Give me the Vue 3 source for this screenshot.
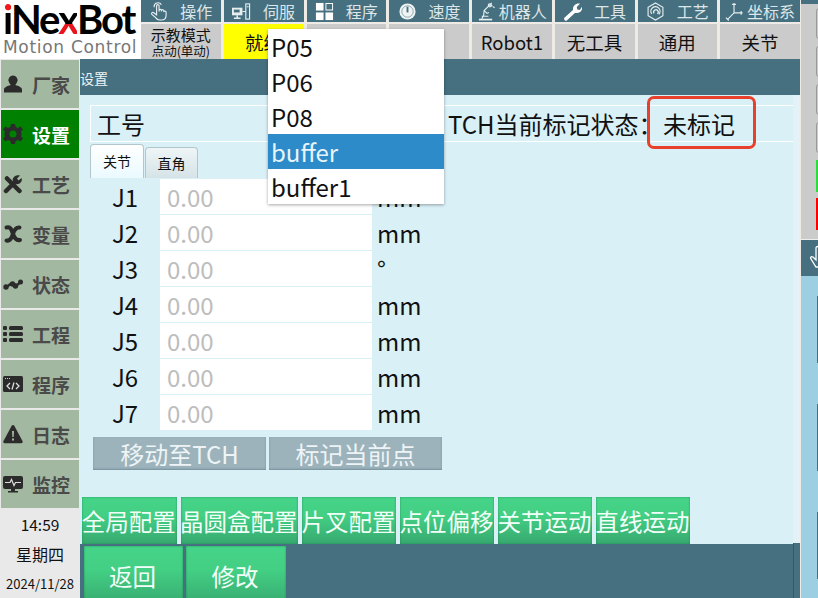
<script setup>
const nav = [
  { t: '操作', i: 'hand' }, { t: '伺服', i: 'servo' }, { t: '程序', i: 'grid' }, { t: '速度', i: 'gauge' },
  { t: '机器人', i: 'robot' }, { t: '工具', i: 'wrench' }, { t: '工艺', i: 'hex' }, { t: '坐标系', i: 'axes' }
]
const side = [
  { t: '厂家', i: 'user' }, { t: '设置', i: 'gear', on: true }, { t: '工艺', i: 'tools' }, { t: '变量', i: 'var' },
  { t: '状态', i: 'wave' }, { t: '工程', i: 'list' }, { t: '程序', i: 'code' }, { t: '日志', i: 'warn' }, { t: '监控', i: 'monitor' }
]
const joints = [
  ['J1', 'mm'], ['J2', 'mm'], ['J3', '°'], ['J4', 'mm'], ['J5', 'mm'], ['J6', 'mm'], ['J7', 'mm']
]
const greens = [
  ['全局配置', 94.5], ['晶圆盒配置', 117.5], ['片叉配置', 94], ['点位偏移', 94], ['关节运动', 94], ['直线运动', 94]
]
const options = ['P05', 'P06', 'P08', 'buffer', 'buffer1']
</script>

<template>
  <div class="screen">
    <div class="left">
      <header class="top">
        <div class="logo">
          <div class="brand"><span class="i">i</span>Ne<span class="x">x</span>Bot</div>
          <div class="motto">Motion Control</div>
        </div>
        <div class="topgrid">
          <div v-for="n in nav" :key="n.t" class="navitem" :class="{ wide: n.t.length > 2 }">
            <svg class="navicon" viewBox="0 0 20 20" fill="none" stroke="#e6eef0" stroke-width="1.2">
              <g v-if="n.i === 'hand'">
                <path d="M8 6.500V4a1.300 1.300 0 0 1 2.600 0v6l.1-1.200a1.200 1.200 0 0 1 2.400 .2V10l.1-.8a1.200 1.200 0 0 1 2.400 .2v1l.1-.2a1.200 1.200 0 0 1 2.300 .3V14c0 3-2 5-5 5h-2c-2 0-3-1-4-2.500L3 13c-1-1.500.8-2.800 2-1.700L8 13.500z" />
                <path d="M5.500 5.500a4 4 0 0 1 7.500-2.500" />
              </g>
              <g v-else-if="n.i === 'servo'">
                <rect x="0" y="6" width="11" height="8" fill="#e6eef0" stroke="none" />
                <rect x="2" y="8" width="6" height="3" fill="#46707f" stroke="none" />
                <path d="M2 17h7M5.500 14v3" stroke-width="1.600" />
                <rect x="14.500" y="2" width="4" height="16" />
                <path d="M11 10h3.500M15.500 5h2" />
              </g>
              <g v-else-if="n.i === 'grid'" stroke="none" fill="#fff">
                <rect x="1" y="1" width="8" height="8" />
                <path d="M11 1h8v8h-8zM12 2v6h6V2z" fill-rule="evenodd" />
                <rect x="1" y="11" width="8" height="8" />
                <rect x="11" y="11" width="8" height="8" />
              </g>
              <g v-else-if="n.i === 'gauge'">
                <circle cx="10" cy="10" r="8.500" fill="#eef3f4" stroke="none" />
                <circle cx="10" cy="10" r="6" stroke="#8aa4ae" stroke-width="1" />
                <path d="M10 11V5" stroke="#46707f" stroke-width="2" />
              </g>
              <g v-else-if="n.i === 'robot'">
                <path d="M2 18.500h14" stroke-width="1.800" />
                <path d="M5 18l2-4 .5-5 6-6 3 1.500M5 15h7M7.500 9l3 3 2-1M13.500 3l2-2M17 5l1.500 1" />
                <circle cx="13.500" cy="3.500" r="1.600" />
              </g>
              <path v-else-if="n.i === 'wrench'" d="M1.500 16.500L10.500 8.500C10 4 13.500 .8 18 1.700L14.500 5.300l.6 2.500 2.600.5L20 5c.8 4-2.500 7.500-7.500 6.500L4 19.500c-1.300 1-3.800-1.200-2.500-3z" fill="#fff" stroke="none" />
              <g v-else-if="n.i === 'hex'">
                <path d="M10 1l7.800 4.500v9L10 19l-7.800-4.500v-9z" />
                <path d="M6 12.500a4.800 4.800 0 1 1 7.500 .5M8.500 12a2.400 2.400 0 1 1 3.500 .5" stroke-width="1.300" />
              </g>
              <g v-else>
                <path d="M9.500 1v10.500M9.500 11.500h9M9.500 11.500l-7 7" />
                <path d="M7.500 2.500h4M17 9.500v4M1 16.500l3 3" />
              </g>
            </svg>
            <span>{{ n.t }}</span>
          </div>
          <div class="state mode"><span>示教模式</span><small>点动(单动)</small></div>
          <div class="state ready">就绪</div>
          <div class="state"></div>
          <div class="state"></div>
          <div class="state">Robot1</div>
          <div class="state">无工具</div>
          <div class="state">通用</div>
          <div class="state">关节</div>
        </div>
      </header>

      <div class="body">
        <aside class="side">
          <div v-for="s in side" :key="s.t" class="sideitem" :class="{ on: s.on }">
            <svg class="sideicon" viewBox="0 0 20 20" fill="#2b2b2b">
              <path v-if="s.i === 'user'" d="M10 1.500a4.500 4.500 0 0 1 4.200 6.200c-.5 1.500-1.500 2.800-2 3.300 3.800 1 6.800 2.500 6.800 4.500V18.500H1v-3c0-2 3-3.500 6.800-4.500-.5-.5-1.500-1.800-2-3.300A4.500 4.500 0 0 1 10 1.500z" />
              <path v-else-if="s.i === 'gear'" fill-rule="evenodd" d="M8 0h4l.6 3 2.400 1 2.600-1.600 2.400 3-2 2.200.6 2.400-.6 2.400 2 2.200-2.400 3L15 16l-2.400 1L12 20H8l-.6-3L5 16l-2.600 1.600-2.400-3 2-2.200L1.400 10 2 7.600 0 5.400l2.400-3L5 4l2.400-1zM10 6.500a3.500 3.500 0 1 0 0 7 3.500 3.500 0 0 0 0-7z" />
              <g v-else-if="s.i === 'tools'">
                <path d="M4 4.500L16.500 17" stroke="#2b2b2b" stroke-width="4.500" stroke-linecap="round" />
                <path d="M2.500 2.500L6 3.500 4 6z" />
                <path d="M3 17L11.500 8.500" stroke="#2b2b2b" stroke-width="4.500" stroke-linecap="round" />
                <path d="M9.500 6C10 2.500 13.500 .5 17 1.500L14 4.500l1.500 2 3-2.500C20 7.500 16.500 11 12.500 10z" />
              </g>
              <g v-else-if="s.i === 'var'" fill="none" stroke="#2b2b2b" stroke-width="4" stroke-linecap="round">
                <path d="M3.500 3.500C8 2 9 7 10 10s2.500 7 7 6" />
                <path d="M16.500 3.500C12 3 11 7 10 10S7.500 17.500 3.500 16.500" />
              </g>
              <g v-else-if="s.i === 'wave'">
                <path d="M3 13c2 0 3.500-3.500 6-3.500S12 12 14 11s2-2 3.500-3" fill="none" stroke="#2b2b2b" stroke-width="2.500" />
                <circle cx="3" cy="13" r="2.700" /><circle cx="9.500" cy="10" r="2.700" /><circle cx="12.500" cy="12" r="2.700" /><circle cx="17.500" cy="8" r="2.500" />
              </g>
              <g v-else-if="s.i === 'list'">
                <rect x="0" y="2" width="4" height="4" rx="1" /><rect x="6" y="2" width="14" height="4" rx="1.500" />
                <rect x="0" y="8" width="4" height="4" rx="1" /><rect x="6" y="8" width="14" height="4" rx="1.500" />
                <rect x="0" y="14" width="4" height="4" rx="1" /><rect x="6" y="14" width="14" height="4" rx="1.500" />
              </g>
              <g v-else-if="s.i === 'code'">
                <rect x="0" y="2" width="20" height="16" rx="1.500" />
                <path d="M7 9l-3 3 3 3M13 9l3 3-3 3M11 8.500l-2 7" fill="none" stroke="#ddd" stroke-width="1.300" />
                <path d="M2 4.500h5" stroke="#ccc" stroke-dasharray="1 1" />
              </g>
              <g v-else-if="s.i === 'warn'">
                <path d="M10 1c.6 0 1 .3 1.300.8l8.300 15.400c.5 1-.2 2-1.300 2H1.700c-1.100 0-1.800-1-1.300-2L8.700 1.800C9 1.300 9.400 1 10 1z" />
                <path d="M9 7h2l-.3 6H9.300zM9 14.500h2v2H9z" fill="#a3b8a0" />
              </g>
              <g v-else>
                <rect x="0" y="2" width="20" height="13" rx="2" />
                <path d="M8 15h4v2h3v1.500H5V17h3z" />
                <path d="M2 8.500h5l1.500-3 2.500 6 1.500-3h5.500" fill="none" stroke="#ddd" stroke-width="1.200" />
              </g>
            </svg>
            <span>{{ s.t }}</span>
          </div>
          <div class="clock">
            <div class="time">14:59</div>
            <div class="week">星期四</div>
            <div class="date">2024/11/28</div>
          </div>
        </aside>

        <main class="main">
          <div class="title">设置</div>
          <section class="content">
            <div class="idrow">
              <span class="idlabel">工号</span>
              <span class="tch">TCH当前标记状态：</span>
              <span class="marked">未标记</span>
            </div>
            <div class="tabs">
              <div class="tab active">关节</div>
              <div class="tab">直角</div>
            </div>
            <div class="joints">
              <div v-for="j in joints" :key="j[0]" class="jrow">
                <span class="jname">{{ j[0] }}</span>
                <span class="jval">0.00</span>
                <span class="junit">{{ j[1] }}</span>
              </div>
            </div>
            <div class="actions">
              <div class="act">移动至TCH</div>
              <div class="act">标记当前点</div>
            </div>
            <div class="greens">
              <div v-for="g in greens" :key="g[0]" class="btn" :style="{ width: g[1] + 'px' }">{{ g[0] }}</div>
            </div>
          </section>
          <footer class="foot">
            <div class="btn big">返回</div>
            <div class="btn big second">修改</div>
          </footer>
        </main>
      </div>
    </div>

    <aside class="right">
      <div class="rtop">
        <i class="mark out"></i>
        <i class="mark out"></i>
        <i class="mark out"></i>
        <i class="mark out"></i>
        <i class="mark green"></i>
        <i class="mark red"></i>
      </div>
      <div class="rhand">
        <svg viewBox="0 0 20 36" width="20" height="36" fill="none" stroke="#fff" stroke-width="1.300">
          <path d="M9 8a1.500 1.500 0 0 1 3 0v9M9 8v12l-3-3c-2-1-3 .5-2 2l5 8h11V10" />
        </svg>
      </div>
      <div class="rpanel">
        <i></i><i></i><i></i>
      </div>
    </aside>

    <div class="notch"></div>
    <div class="annot"></div>
    <ul class="drop">
      <li v-for="o in options" :key="o" :class="{ sel: o === 'buffer' }">{{ o }}</li>
    </ul>
  </div>
</template>

<style scoped>
.screen {
  position: relative;
  width: 818px;
  height: 598px;
  display: flex;
  overflow: hidden;
  background: #fff;
  font-family: "Noto Sans CJK SC", "Noto Sans", sans-serif;
  color: #111;
}
.left { width: 801px; display: flex; flex-direction: column; }

.top { height: 59px; display: flex; background: #eeeae6; }
.logo { width: 141px; padding: 0 0 0 3px; box-sizing: border-box; background: #fff; }
.brand {
  font: 700 40px/39px "Lato", "Liberation Sans", sans-serif;
  color: #000;
  letter-spacing: -2px;
  white-space: nowrap;
}
.brand .i {
  background: linear-gradient(#f01818 0 17px, #000 17px);
  -webkit-background-clip: text;
  background-clip: text;
  color: transparent;
}
.brand .x {
  background: linear-gradient(#000 0 29px, #e8141c 29px);
  -webkit-background-clip: text;
  background-clip: text;
  color: transparent;
}
.motto {
  font: 17px/17px "DejaVu Sans", sans-serif;
  color: #777;
  letter-spacing: 0.7px;
  white-space: nowrap;
}
.topgrid {
  width: 659px;
  display: grid;
  grid-template-columns: repeat(8, 1fr);
  grid-template-rows: 22px 35px;
  column-gap: 3px;
  row-gap: 2px;
}
.navitem {
  background: #46707f;
  color: #dde6e9;
  font-size: 16px;
  line-height: 22px;
  display: flex;
  align-items: center;
  justify-content: center;
  gap: 12px;
}
.navitem.wide { gap: 3px; }
.navicon { width: 19px; height: 19px; flex: none; }
.state {
  background: #cbcbcb;
  font-size: 18.500px;
  display: flex;
  flex-direction: column;
  align-items: center;
  justify-content: center;
  line-height: 24px;
}
.state.ready { background: #ffff00; }
.state.mode span { font-size: 15px; line-height: 19px; }
.state.mode small { font-size: 12.500px; line-height: 14px; }

.body { flex: 1; display: flex; min-height: 0; }
.side { width: 80px; flex: none; display: flex; flex-direction: column; background: #e9e9e9; }
.sideitem {
  height: 48px;
  margin: 1px;
  background: #a3b8a0;
  color: #4a4a4a;
  display: flex;
  align-items: center;
  font-size: 19px;
  font-weight: 700;
  padding-left: 2px;
  gap: 9px;
}
.sideitem.on { background: #008000; color: #fff; }
.sideicon { width: 20px; height: 20px; flex: none; }
.clock { text-align: center; flex: 1; }
.time { font-size: 15.500px; line-height: 20px; margin-top: 5px; }
.week { font-size: 16px; line-height: 20px; margin-top: 10px; }
.date { font-size: 13px; line-height: 18px; margin-top: 11px; }

.main {
  flex: 1;
  display: flex;
  flex-direction: column;
  background: #46707f;
  min-width: 0;
  border-right: 1px solid #eeeae6;
}
.title { height: 36px; color: #eef4f6; font-size: 14px; line-height: 39px; }
.content {
  height: 450px;
  box-sizing: border-box;
  margin-right: 7px;
  background: #d9f0f7;
  padding: 10px 0 0 10px;
  box-shadow: 7px 0 0 #e4f1f6;
}
.idrow {
  height: 37px;
  box-sizing: border-box;
  border-top: 1px solid #fff;
  border-bottom: 1px solid #fff;
  border-left: 1px solid #fff;
  display: flex;
  align-items: center;
  font-size: 24px;
  white-space: nowrap;
}
.idlabel { margin-left: 6px; width: 351px; }
.tch { width: 199px; }
.marked { margin-left: 16px; }
.tabs { display: flex; height: 34px; margin-top: 2px; gap: 1px; align-items: flex-end; }
.tab {
  width: 53px;
  height: 31px;
  box-sizing: border-box;
  border: 1px solid #b3c6cc;
  border-bottom: none;
  border-radius: 4px 4px 0 0;
  background: linear-gradient(#eef5f7, #d5e3e8);
  font-size: 14px;
  line-height: 30px;
  text-align: center;
}
.tab.active { height: 34px; background: linear-gradient(#fff, #eafaff); line-height: 32px; width: 54px; }
.joints { display: flex; flex-direction: column; }
.jrow { height: 36px; display: flex; align-items: center; font-size: 24px; }
.jname { width: 70px; text-align: center; }
.jval {
  width: 212px;
  height: 35px;
  margin-right: 5px;
  background: #fff;
  color: #bdbdbd;
  padding-left: 7px;
  box-sizing: border-box;
  line-height: 35px;
}
.actions { display: flex; gap: 3px; margin: 7px 0 0 3px; }
.act {
  width: 173px;
  height: 33px;
  background: #9cb3bc;
  color: #eef4f6;
  font-size: 24px;
  line-height: 33px;
  text-align: center;
  box-shadow: inset 0 -1px 2px rgba(60, 90, 100, .4);
}
.greens { display: flex; gap: 4px; margin: 27px 0 0 -8px; }
.btn {
  height: 47px;
  background: linear-gradient(#45d488 0%, #43cf84 40%, #37a96f 100%);
  box-shadow: inset 0 0 2px rgba(20, 110, 70, .7);
  color: #f2fff8;
  font-size: 23.500px;
  line-height: 49px;
  text-align: center;
  white-space: nowrap;
  text-indent: -1px;
}
.foot { flex: 1; display: flex; gap: 3px; padding: 2px 0 0 4px; }
.btn.big { width: 99px; height: 60px; line-height: 60px; text-indent: -2px; }
.btn.big.second { width: 100px; }

.right { flex: 1; display: flex; flex-direction: column; overflow: hidden; }
.rtop {
  height: 239px;
  background: #cbcbcb;
  border-top: 4px solid #46707f;
  box-sizing: border-box;
  padding: 4px 0 0 15px;
  display: flex;
  flex-direction: column;
  gap: 7px;
}
.mark { display: block; width: 4px; flex: none; }
.mark.out { height: 31px; border: 1px solid #999; border-radius: 3px; box-sizing: border-box; width: 8px; }
.mark.green { height: 32px; background: #2bdc3c; }
.mark.red { height: 32px; background: #ff0000; margin-top: -1px; }
.rhand { height: 37px; box-sizing: border-box; background: #46707f; border-top: 1px solid #eee; }
.rhand svg { display: block; margin-left: 6px; }
.rpanel {
  flex: 1;
  background: #9dcfe2;
  padding-top: 20px;
  display: flex;
  flex-direction: column;
  gap: 41px;
}
.rpanel i { display: block; width: 1px; height: 67px; margin-left: 16px; background: #46707f; }

.notch {
  position: absolute;
  left: 793px;
  top: 543px;
  width: 7px;
  height: 55px;
  box-sizing: border-box;
  background: #46707f;
  border-left: 1px solid #365a69;
}
.annot {
  position: absolute;
  left: 647px;
  top: 96px;
  width: 109px;
  height: 53px;
  box-sizing: border-box;
  border: 3px solid #e8402a;
  border-radius: 7px;
}
.drop {
  position: absolute;
  left: 268px;
  top: 29px;
  width: 176px;
  height: 175px;
  margin: 0;
  padding: 0;
  list-style: none;
  background: #fff;
  box-shadow: 0 1px 3px rgba(0, 0, 0, .35);
}
.drop li { height: 35px; line-height: 36px; padding-left: 3px; font-size: 24px; color: #111; box-sizing: border-box; }
.drop li.sel { background: #2e8bc9; color: #e8f4fb; }
</style>

<style>
html, body { margin: 0; padding: 0; }
</style>
